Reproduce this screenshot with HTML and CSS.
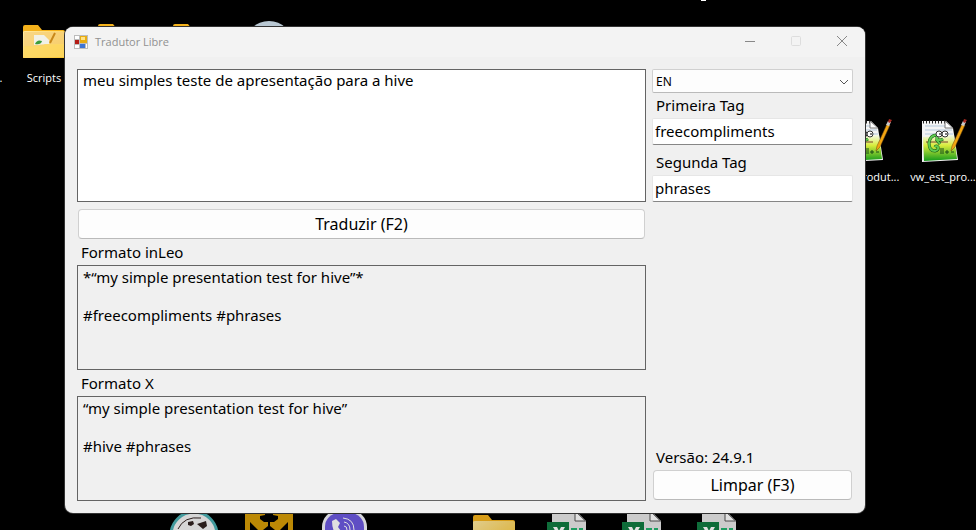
FILE: index.html
```
<!DOCTYPE html>
<html lang="pt-BR">
  <head>
    <meta charset="UTF-8" />
    <meta name="viewport" content="width=device-width, initial-scale=1.0" />
    <title>Tradutor Libre</title>
    <link rel="stylesheet" href="styles.css">
  </head>
  <body>
    <!-- Shared desktop icons -->
    <svg class="sprites" aria-hidden="true">
      <defs>
        <linearGradient id="folder-front" x1="0" y1="0" x2="1" y2="1">
          <stop offset="0" stop-color="#ffe9a0" />
          <stop offset="1" stop-color="#fbc62f" />
        </linearGradient>
        <linearGradient id="grass" x1="0" y1="0" x2="0" y2="1">
          <stop offset="0" stop-color="#f4f8e8" />
          <stop offset="0.4" stop-color="#d8ec3c" />
          <stop offset="1" stop-color="#139a1c" />
        </linearGradient>
        <symbol id="folder" viewBox="0 0 48 48">
          <path d="M3 9q0-2 2-2h13l4 5h21q2 0 2 2v26H3z" fill="#f5b21b" />
          <path d="M3 14q0-1 2-1h38q2 0 2 2v24q0 1-2 1H5q-2 0-2-1z" fill="url(#folder-front)" />
        </symbol>
        <symbol id="excel" viewBox="0 0 48 48">
          <path d="M7 2h23l11 11v33H7z" fill="#e8e8e8" />
          <path d="M30 3v10h10.500z" fill="#fff" stroke="#555" />
          <path d="M26 20h6v4h-6zM34 20h4v4h-4z" fill="#21b36e" />
          <rect x="2" y="14" width="22" height="22" fill="#107c41" />
          <path d="M8 19h4l2 4 2-4h4l-4 7 4 7h-4l-2-4-2 4H8l4-7z" fill="#fff" />
        </symbol>
        <symbol id="notepad" viewBox="2 0 48 48">
          <path d="M5 4h24l7 7 5 32-36 2z" fill="#f4f4f4" />
          <path d="M8 9h20M8 13h27M8 17h28" stroke="#b4c9dc" />
          <path d="M6 20l31-2 3 24-33 2z" fill="url(#grass)" />
          <path d="M6 5h23" stroke="#222" stroke-width="3" stroke-dasharray="1 2" />
          <path d="M28 4v7h8z" fill="#fff" stroke="#777" />
          <path d="M9 25h22" stroke="#7a3f2a" />
          <path d="M26 22q-3 2-6 0v-4q-7 0-8 8 0 8 6 8 4-1 3-4-2-2-3 0M19 22l4 5" fill="none" stroke="#175c18" stroke-width="3" />
          <path d="M26 22q-3 2-6 0v-4q-7 0-8 8 0 8 6 8 4-1 3-4-2-2-3 0M19 22l4 5" fill="none" stroke="#5fcb50" stroke-width="2" />
          <circle cx="22" cy="17" r="3" fill="#fff" stroke="#333" />
          <circle cx="28" cy="17" r="3" fill="#fff" stroke="#333" />
          <path d="M23 16v2M29 16v2" stroke="#000" />
          <path d="M24 31v6M26 31v6M28 35h4M34 35h3M30 33v4" stroke="#194c16" />
          <path d="M34 34l1-5L45 7l3 1-10 22z" fill="#f2a511" stroke="#6d4710" stroke-width="0.500" />
          <path d="M44 8l2-4 3 1-2 4z" fill="#c9c9c9" />
          <path d="M46 5l1-3 3 1-2 3z" fill="#a82920" />
        </symbol>
      </defs>
    </svg>

    <main class="desktop">
      <div class="shortcut dot"><span>.</span></div>
      <div class="shortcut scripts">
        <svg viewBox="0 0 48 48">
          <use href="#folder" />
          <path d="M4 14h41v13H24l-3 2H4z" fill="#f5cf7c" opacity="0.7" />
          <path d="M14 17h10l5 5v4l-15 1z" fill="#f1f1e8" />
          <path d="M15 26q2-5 7-3-1 4-7 3" fill="#3c9c3c" />
          <path d="M30 25l5-10" stroke="#c88718" stroke-width="2" />
          <path d="M4 28h18l3-2h20v13H4z" fill="#fdd864" opacity="0.8" />
        </svg>
        <span>Scripts</span>
      </div>
      <svg class="icon folder-one" viewBox="0 0 48 48"><use href="#folder" /></svg>
      <svg class="icon folder-two" viewBox="0 0 48 48"><use href="#folder" /></svg>
      <svg class="icon disc" viewBox="0 0 48 48"><circle cx="24" cy="27" r="24" fill="#b9c8d3" /></svg>
      <svg class="cut-label" viewBox="0 0 7 2"><path d="M1 0h5" fill="none" stroke="#fff" stroke-width="2" /></svg>

      <div class="shortcut note-one">
        <svg viewBox="0 0 48 48"><use href="#notepad" /></svg>
        <span>vw_produt...</span>
      </div>
      <div class="shortcut note-two">
        <svg viewBox="0 0 48 48"><use href="#notepad" /></svg>
        <span>vw_est_pro...</span>
      </div>

      <svg class="icon dock dock-panda" viewBox="0 0 48 48">
        <circle cx="24" cy="27" r="23" fill="#f4f4f4" stroke="#4cb0b3" stroke-width="3" />
        <path d="M8 21Q14 8 31 10" fill="none" stroke="#30211f" />
        <path d="M18 14l5-1 1 3-3 2-3-1zM27 16l9-3 1 5-4 3z" fill="#30211f" />
      </svg>
      <svg class="icon dock dock-gold" viewBox="0 0 48 48">
        <path d="M0 0h20v7l-5 1v3l4 3h4v4l-5 4h-5l-8-8v34H0zM48 0H28v7l5 1v3l-4 3h-4v4l5 4h5l8-8v34h5z" fill="#d69c06" />
      </svg>
      <svg class="icon dock dock-phone" viewBox="0 0 48 48">
        <rect x="2" y="2" width="45" height="45" rx="17" fill="#f4f4fa" />
        <rect x="5" y="5" width="39" height="39" rx="14" fill="#6d59e0" />
        <path d="M12 13l4-2 4 4-2 4 6 8-5 3q-7-6-7-17z" fill="#fff" />
        <path d="M23 10q11 1 11 12M24 14q6 1 6 8M24 18q3 0 3 4" fill="none" stroke="#fff" />
      </svg>
      <svg class="icon dock dock-folder" viewBox="0 0 48 48"><use href="#folder" /></svg>
      <svg class="icon dock dock-excel-one" viewBox="0 0 48 48"><use href="#excel" /></svg>
      <svg class="icon dock dock-excel-two" viewBox="0 0 48 48"><use href="#excel" /></svg>
      <svg class="icon dock dock-excel-three" viewBox="0 0 48 48"><use href="#excel" /></svg>

      <section class="window">
        <header class="titlebar">
          <svg class="app-icon" viewBox="0 0 14 14">
            <path d="M0 0h14v14H0z" fill="#bcbcbc" />
            <path d="M1 1h4v3H1zM1 10h4v3H1zM12 9h1v4h-1z" fill="#fff" />
            <path d="M1 5h4v4H1z" fill="#b51c16" />
            <path d="M6 1h7v7H6z" fill="#e8ac12" />
            <path d="M7 2h4v3H7z" fill="#ffe384" />
            <path d="M6 9h5v4H6z" fill="#3d74d6" />
          </svg>
          <h1>Tradutor Libre</h1>
          <div class="window-buttons">
            <button type="button" aria-label="Minimizar"><svg viewBox="0 0 12 12"><path d="M1 6.500h10" /></svg></button>
            <button type="button" aria-label="Maximizar" disabled><svg viewBox="0 0 12 12"><rect x="1.500" y="1.500" width="9" height="9" rx="1" /></svg></button>
            <button type="button" aria-label="Fechar"><svg viewBox="0 0 12 12"><path d="M1 1l10 10M11 1L1 11" /></svg></button>
          </div>
        </header>

        <form class="content">
          <div class="texts">
            <textarea id="source" class="source" aria-label="Texto" spellcheck="false">meu simples teste de apresentação para a hive</textarea>
            <button type="button" class="action">Traduzir (F2)</button>
            <label for="inleo">Formato inLeo</label>
            <textarea id="inleo" class="result" readonly spellcheck="false">*“my simple presentation test for hive”*

#freecompliments #phrases</textarea>
            <label for="x">Formato X</label>
            <textarea id="x" class="result" readonly spellcheck="false">“my simple presentation test for hive”

#hive #phrases</textarea>
          </div>

          <div class="options">
            <div class="language">
              <select aria-label="Idioma">
                <option>EN</option>
              </select>
              <svg viewBox="0 0 10 6"><path d="M1 1l4 4 4-4" /></svg>
            </div>
            <label for="tag1">Primeira Tag</label>
            <input type="text" id="tag1" value="freecompliments" />
            <label for="tag2" class="second">Segunda Tag</label>
            <input type="text" id="tag2" value="phrases" />
            <p class="version">Versão: 24.9.1</p>
            <button type="reset" class="action">Limpar (F3)</button>
          </div>
        </form>
      </section>
    </main>
  </body>
</html>
```

FILE: styles.css
```
* {
  box-sizing: border-box;
}

body {
  margin: 0;
  background-color: #000;
  color: #000;
  font-family: "Noto Sans", sans-serif;
  font-size: 15px;
}

.sprites {
  position: absolute;
  width: 0;
  height: 0;
}

/* Desktop */
.desktop {
  position: relative;
  height: 100vh;
  overflow: hidden;
}

.shortcut {
  position: absolute;
  width: 76px;
  text-align: center;
  color: #fff;
  font: 11px/16px "Open Sans", sans-serif;
}

.shortcut svg {
  display: block;
  width: 48px;
  height: 48px;
  margin: 0 auto 4px;
}

.icon {
  position: absolute;
  width: 48px;
  height: 48px;
}

.dot {
  left: -37px;
  top: 70px;
}

.scripts {
  left: 6px;
  top: 18px;
}

.folder-one {
  left: 95px;
  top: 17px;
}

.folder-two {
  left: 170px;
  top: 17px;
}

.disc {
  left: 245px;
  top: 18px;
}

.cut-label {
  position: absolute;
  left: 700px;
  top: 0;
  width: 7px;
  height: 2px;
}

.note-one {
  left: 830px;
  top: 117px;
}

.note-two {
  left: 905px;
  top: 117px;
}

.dock {
  top: 508px;
  opacity: 0.88;
}

.dock-panda {
  left: 170px;
}

.dock-gold {
  left: 245px;
}

.dock-phone {
  left: 320px;
}

.dock-folder {
  left: 470px;
}

.dock-excel-one {
  left: 545px;
}

.dock-excel-two {
  left: 620px;
}

.dock-excel-three {
  left: 695px;
}

/* Window */
.window {
  position: absolute;
  left: 65px;
  right: 111px;
  top: 27px;
  background-color: #f0f0f0;
  border-radius: 8px;
  box-shadow: 0 0 0 1px #333;
  overflow: hidden;
}

.titlebar {
  display: flex;
  align-items: center;
  height: 30px;
  padding-left: 9px;
  background-color: #f3f3f3;
}

.app-icon {
  width: 14px;
  height: 14px;
}

h1 {
  flex: 1;
  margin: 0 0 0 7px;
  font: 11px/16px "Open Sans", sans-serif;
  color: #919191;
}

.window-buttons {
  display: flex;
}

.window-buttons button {
  width: 46px;
  height: 30px;
  padding: 0;
  border: none;
  background: none;
}

.window-buttons svg {
  width: 12px;
  height: 12px;
  fill: none;
  stroke: #888;
}

.window-buttons button:disabled svg {
  stroke: #ddd;
}

/* Form */
.content {
  display: flex;
  gap: 6px;
  padding: 12px;
}

.texts {
  flex: 1;
  display: flex;
  flex-direction: column;
}

.options {
  width: 201px;
  padding-bottom: 1px;
  display: flex;
  flex-direction: column;
}

label,
.version {
  margin: 0;
  padding: 0 4px;
  line-height: 25px;
}

.texts label {
  line-height: 26px;
}

textarea {
  display: block;
  padding: 2px 5px;
  border: 1px solid #646464;
  border-radius: 0;
  color: #000;
  font: inherit;
  line-height: 19px;
  resize: none;
  outline: none;
}

.source {
  height: 133px;
  margin-bottom: 7px;
  padding-top: 1px;
  background-color: #fff;
}

.result {
  height: 105px;
  background-color: #f0f0f0;
}

.action {
  height: 30px;
  margin: 0 1px;
  border: 1px solid #d0d0d0;
  border-bottom-color: #bababa;
  border-radius: 4px;
  background-color: #fdfdfd;
  color: #000;
  font: inherit;
  font-size: 16px;
}

.language {
  position: relative;
}

select {
  display: block;
  width: 100%;
  height: 24px;
  padding: 0 3px;
  border: 1px solid #d0d0d0;
  border-bottom-color: #bababa;
  border-radius: 2px;
  background-color: #fdfdfd;
  color: #000;
  font: inherit;
  font-size: 12px;
  appearance: none;
}

.language svg {
  position: absolute;
  right: 4px;
  top: 10px;
  width: 10px;
  height: 6px;
  fill: none;
  stroke: #555;
  pointer-events: none;
}

input {
  width: 100%;
  height: 27px;
  padding: 0 2px 2px;
  border: 1px solid #e6e6e6;
  border-bottom-color: #868686;
  border-radius: 2px;
  background-color: #fff;
  color: #000;
  font: inherit;
}

.second {
  margin-top: 5px;
}

.version {
  margin-top: auto;
}
```
